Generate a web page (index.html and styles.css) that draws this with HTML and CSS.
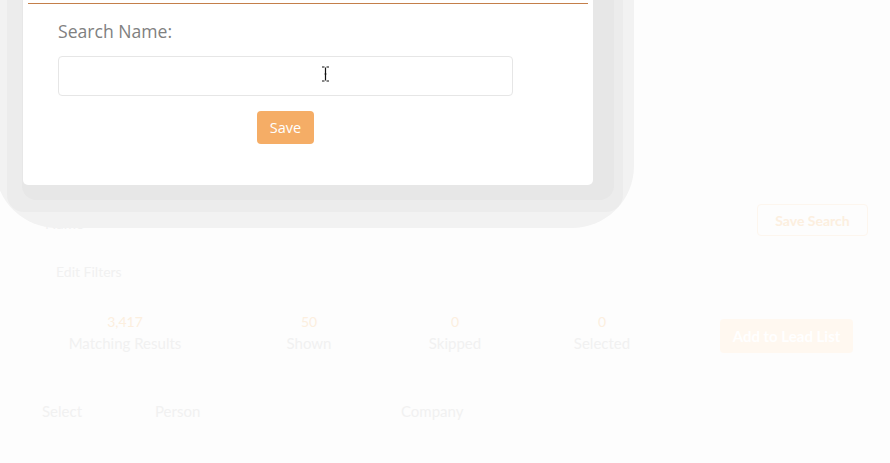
FILE: index.html
```html
<!DOCTYPE html>
<html lang="en">
  <head>
    <meta charset="UTF-8" />
    <meta name="viewport" content="width=device-width, initial-scale=1.0" />
    <title>Leads - Save Search</title>
    <link rel="stylesheet" href="styles.css">
  </head>
  <body>
    <div class="page">
      <h1 class="page-title">Leads</h1>

      <div class="search-row">
        <span class="search-label">Name</span>
        <button class="btn-outline">Save Search</button>
      </div>

      <a class="edit-filters">Edit Filters</a>

      <div class="stats-row">
        <div class="stat">
          <div class="stat-num">3,417</div>
          <div class="stat-label">Matching Results</div>
        </div>
        <div class="stat">
          <div class="stat-num">50</div>
          <div class="stat-label">Shown</div>
        </div>
        <div class="stat">
          <div class="stat-num">0</div>
          <div class="stat-label">Skipped</div>
        </div>
        <div class="stat">
          <div class="stat-num">0</div>
          <div class="stat-label">Selected</div>
        </div>
        <button class="btn-add">Add to Lead List</button>
      </div>

      <div class="table-head">
        <span class="col-select">Select</span>
        <span class="col-person">Person</span>
        <span class="col-company">Company</span>
      </div>
    </div>

    <!-- save search dialog -->
    <div class="modal">
      <div class="modal-box">
        <div class="modal-header"></div>
        <div class="modal-body">
          <label class="field-label">Search Name:</label>
          <div class="field-wrap">
            <input class="field-input" type="text" />
            <svg class="ibeam" width="9" height="16" viewBox="0 0 9 16">
              <path d="M1 1h2.5M5.5 1H8M4.5 1.5v13M1 15h2.5M5.5 15H8M3.5 8h2" stroke="#111" stroke-width="1.2" fill="none"/>
            </svg>
          </div>
          <div class="modal-actions">
            <button class="btn-save">Save</button>
          </div>
        </div>
      </div>
    </div>
  </body>
</html>
```

FILE: styles.css
```css
:root {
  --faint: #f1f1f1;
  --faint-orange: #fcefdf;
  --orange: #f5ad66;
  --line: #c47f4a;
}

body {
  margin: 0;
  background: #fdfdfd;
  font-family: "Lato", "Open Sans", sans-serif;
  overflow: hidden;
}

.page {
  padding: 0 22px 0 42px;
  color: var(--faint);
}

.page-title {
  margin: 21px 0 0 -68px;
  font-size: 20px;
  line-height: 28px;
  font-weight: 700;
  color: #f4ede6;
}

.search-row {
  display: flex;
  justify-content: space-between;
  align-items: flex-end;
  margin-top: 155px;
}

.search-label {
  margin-left: 3px;
  padding-bottom: 4px;
  font-size: 15px;
}

.btn-outline {
  width: 111px;
  height: 32px;
  background: transparent;
  border: 1px solid #fdf6ee;
  border-radius: 4px;
  color: var(--faint-orange);
  font-family: inherit;
  font-size: 14px;
  font-weight: 700;
}

.edit-filters {
  display: block;
  margin: 26px 0 0 14px;
  font-size: 14px;
  line-height: 20px;
}

.stats-row {
  display: grid;
  grid-template-columns: 166px 202px 90px 204px auto;
  align-items: end;
  margin-top: 30px;
}

.stat {
  text-align: center;
}

.stat-num {
  font-size: 14px;
  line-height: 20px;
  color: var(--faint-orange);
}

.stat-label {
  font-size: 15px;
  line-height: 22px;
}

.btn-add {
  justify-self: start;
  margin: 0 0 1px 16px;
  width: 133px;
  height: 34px;
  background: #fff8f0;
  border: none;
  border-radius: 4px;
  color: #fff;
  font-family: inherit;
  font-size: 15px;
  font-weight: 700;
}

.table-head {
  display: flex;
  margin-top: 47px;
  font-size: 15px;
  line-height: 20px;
}

.col-select {
  width: 113px;
}

.col-person {
  width: 246px;
}

/* dialog */
.modal {
  position: absolute;
  left: 23px;
  top: -30px;
  width: 570px;
  font-family: "Open Sans", sans-serif;
}

/* outer, widest band of the drop shadow */
.modal::before {
  content: "";
  position: absolute;
  top: 0;
  left: -28px;
  right: -41px;
  bottom: -43px;
  border-radius: 0 0 62px 62px;
  background: #f2f2f2;
}

.modal-box {
  position: relative;
  background: #fff;
  border-radius: 5px;
  box-shadow: 10px 4px 0 11px #e7e7e7, 7px 4px 0 23px #ececec;
}

.modal-header {
  height: 33px;
  margin: 0 5px;
  border-bottom: 1px solid var(--line);
}

.modal-body {
  padding: 15px 80px 41px 35px;
}

.field-label {
  display: block;
  font-size: 17.6px;
  line-height: 24px;
  color: #808080;
}

.field-wrap {
  position: relative;
  margin-top: 13px;
}

.field-input {
  display: block;
  box-sizing: border-box;
  width: 100%;
  height: 40px;
  border: 1px solid #e6e6e6;
  border-radius: 4px;
  outline: none;
}

.ibeam {
  position: absolute;
  left: 263px;
  top: 10px;
}

.modal-actions {
  display: flex;
  justify-content: center;
  margin-top: 15px;
}

.btn-save {
  width: 57px;
  height: 33px;
  background: var(--orange);
  border: none;
  border-radius: 4px;
  color: #fff;
  font-family: inherit;
  font-size: 14.5px;
}
```
